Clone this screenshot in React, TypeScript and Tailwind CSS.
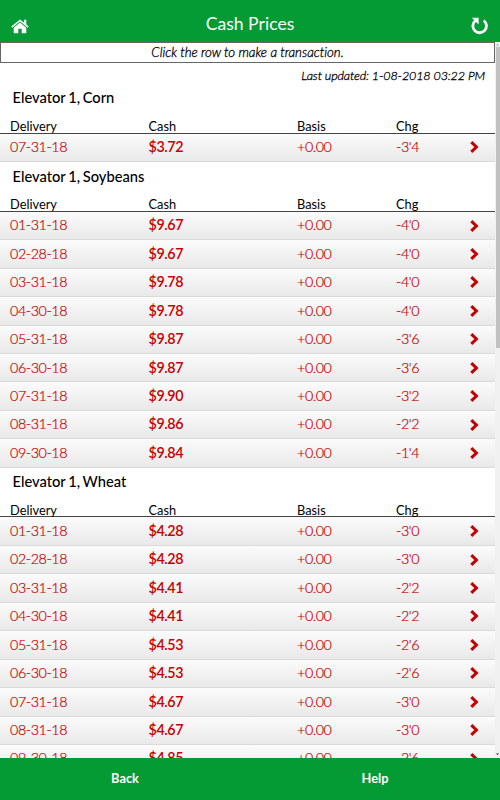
import React from 'react';

interface IPrice {
  delivery: string;
  cash: string;
  chg: string;
}

interface ISection {
  title: string;
  prices: IPrice[];
}

const sections: ISection[] = [
  {
    title: 'Elevator 1, Corn',
    prices: [{ delivery: '07-31-18', cash: '$3.72', chg: "-3'4" }],
  },
  {
    title: 'Elevator 1, Soybeans',
    prices: [
      { delivery: '01-31-18', cash: '$9.67', chg: "-4'0" },
      { delivery: '02-28-18', cash: '$9.67', chg: "-4'0" },
      { delivery: '03-31-18', cash: '$9.78', chg: "-4'0" },
      { delivery: '04-30-18', cash: '$9.78', chg: "-4'0" },
      { delivery: '05-31-18', cash: '$9.87', chg: "-3'6" },
      { delivery: '06-30-18', cash: '$9.87', chg: "-3'6" },
      { delivery: '07-31-18', cash: '$9.90', chg: "-3'2" },
      { delivery: '08-31-18', cash: '$9.86', chg: "-2'2" },
      { delivery: '09-30-18', cash: '$9.84', chg: "-1'4" },
    ],
  },
  {
    title: 'Elevator 1, Wheat',
    prices: [
      { delivery: '01-31-18', cash: '$4.28', chg: "-3'0" },
      { delivery: '02-28-18', cash: '$4.28', chg: "-3'0" },
      { delivery: '03-31-18', cash: '$4.41', chg: "-2'2" },
      { delivery: '04-30-18', cash: '$4.41', chg: "-2'2" },
      { delivery: '05-31-18', cash: '$4.53', chg: "-2'6" },
      { delivery: '06-30-18', cash: '$4.53', chg: "-2'6" },
      { delivery: '07-31-18', cash: '$4.67', chg: "-3'0" },
      { delivery: '08-31-18', cash: '$4.67', chg: "-3'0" },
      { delivery: '09-30-18', cash: '$4.85', chg: "-2'6" },
    ],
  },
];

function PriceRow({ delivery, cash, chg }: IPrice) {
  return (
    <li>
      <button
        type="button"
        className="grid grid-cols-[138.5px_148.5px_99px_1fr_auto] items-center w-full h-[28.45px] pl-2.5 pr-4 pb-px text-left text-[14.3px] tracking-[-0.4px] font-light text-[#c60000] [-webkit-text-stroke:0.2px] bg-linear-to-b from-[#fbfbfb] to-[#e9e9e9] border-b border-[#dadada]"
      >
        <span>{delivery}</span>
        <span className="font-semibold [-webkit-text-stroke:0px]">{cash}</span>
        <span>+0.00</span>
        <span>{chg}</span>
        <svg className="w-[9px] h-3 mt-px" viewBox="0 0 9 12" fill="none" stroke="#c60000" strokeWidth="3">
          <path d="M1.3 1.1L6.4 6L1.3 10.9" />
        </svg>
      </button>
    </li>
  );
}

function PriceSection({ title, prices }: ISection) {
  return (
    <section>
      <h2 className="h-[34px] pl-[12.5px] pt-[2.4px] text-[14.7px] leading-[22px] font-medium [word-spacing:-1px]">{title}</h2>
      <div className="grid grid-cols-[138.5px_148.5px_99px_1fr] h-[15.7px] pl-2.5 text-[12.8px] leading-4 border-b border-[#444]">
        <span>Delivery</span>
        <span>Cash</span>
        <span>Basis</span>
        <span>Chg</span>
      </div>
      <ul>
        {prices.map((price) => (
          <PriceRow key={price.delivery} {...price} />
        ))}
      </ul>
    </section>
  );
}

function App() {
  return (
    <div className="flex flex-col h-[800px] w-[500px] overflow-hidden bg-white text-black font-[Lato,sans-serif]">
      <header className="flex items-center justify-between h-[42px] shrink-0 pl-[11px] pr-3 pt-[6px] bg-[#049a34] text-white">
        <button type="button" aria-label="Home" className="pt-1">
          <svg className="w-[18px] h-[15px]" viewBox="0 0 18 15" fill="white">
            <path d="M9 3.6L15.3 8.8V13.6Q15.3 14.3 14.6 14.3H10.7V9.8H7.3V14.3H3.4Q2.7 14.3 2.7 13.6V8.8Z" />
            <path d="M.8 8.2L9 1.4L17.2 8.2" fill="none" stroke="white" strokeWidth="1.5" />
            <path d="M12.9.8H15.3V6.2L12.9 4.2Z" />
          </svg>
        </button>
        <h1 className="text-[17.6px]">Cash Prices</h1>
        <button type="button" aria-label="Refresh" className="pt-1">
          <svg className="w-[17px] h-[18px]" viewBox="0 0 17 18">
            <path d="M12.7 3.5A6.8 6.8 0 1 1 4.2 3.8" fill="none" stroke="white" strokeWidth="2.8" />
            <path d="M.8.7H7.6V7.5Z" fill="white" />
          </svg>
        </button>
      </header>

      <div className="flex flex-1 min-h-0">
        <main className="flex-1 overflow-hidden">
          <p className="h-[21px] text-center text-[13.3px] leading-[18px] tracking-[-0.03px] italic font-light [-webkit-text-stroke:0.3px] border border-[#666]">
            Click the row to make a transaction.
          </p>
          <p className="h-[21px] pr-2.5 pt-1 text-right text-[12.6px] leading-[18px] tracking-[-0.16px] italic font-light [-webkit-text-stroke:0.3px]">
            Last updated: 1-08-2018 03:22 PM
          </p>
          {sections.map((section) => (
            <PriceSection key={section.title} {...section} />
          ))}
        </main>
        <div className="flex flex-col items-center w-[5px] bg-[#f1f1f1]">
          <svg className="w-[5px] h-[5px]" viewBox="0 0 5 5" fill="#999">
            <path d="M1 3.5L2.5 2L4 3.5Z" />
          </svg>
          <div className="w-[4px] h-[301px] bg-[#c1c1c1]" />
          <svg className="w-[5px] h-[5px] mt-auto mb-px" viewBox="0 0 5 5" fill="#222">
            <path d="M1 1.5H4L2.5 3Z" />
          </svg>
        </div>
      </div>

      <footer className="grid grid-cols-2 h-[42px] shrink-0 bg-[#049a34] text-white text-[12.8px] font-bold">
        <button type="button">Back</button>
        <button type="button">Help</button>
      </footer>
    </div>
  );
}

export default App;
